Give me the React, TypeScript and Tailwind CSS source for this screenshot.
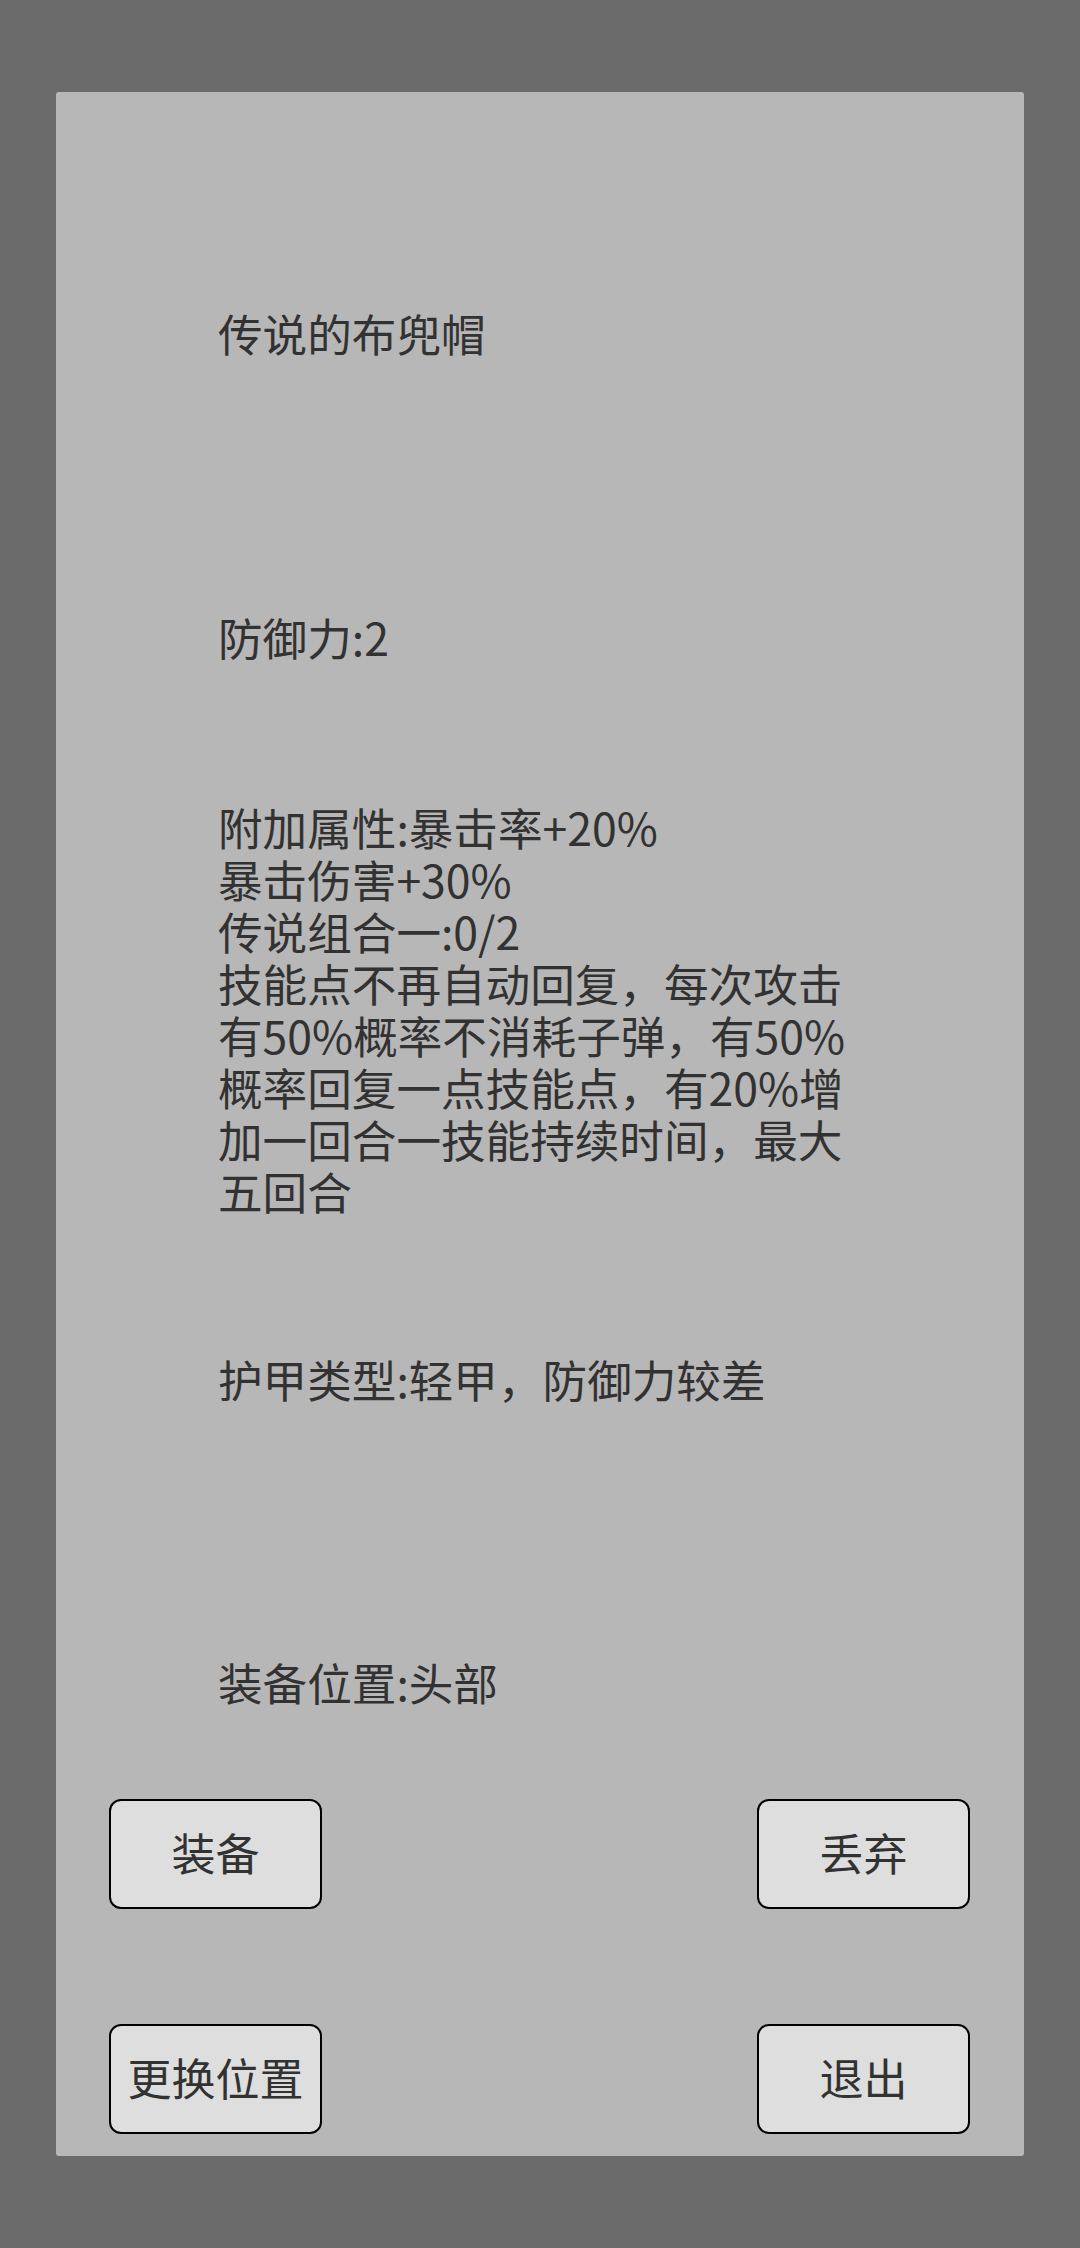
import React from "react";

const font = { fontFamily: '"Noto Sans CJK SC", sans-serif' };

function Btn({ label }: { label: string }) {
  return (
    <div className="w-[213px] h-[110px] rounded-[12px] border-2 border-black bg-[#dedede] flex items-center justify-center pb-[5px] text-[44px] leading-none text-[#323232]">
      {label}
    </div>
  );
}

export default function App() {
  const para = [
    "附加属性:暴击率+20%",
    "暴击伤害+30%",
    "传说组合一:0/2",
    "技能点不再自动回复，每次攻击",
    "有50%概率不消耗子弹，有50%",
    "概率回复一点技能点，有20%增",
    "加一回合一技能持续时间，最大",
    "五回合",
  ];
  return (
    <div className="w-[1080px] h-[2248px] bg-[#6b6b6b] pt-[92px] pl-[56px]" style={font}>
      <div className="w-[968px] h-[2064px] bg-[#b7b7b7] rounded-[3px] flex flex-col text-[#323232] text-[44.6px] leading-[52px]">
        <div className="pl-[162px] pt-[215px] flex flex-col">
          <div className="h-[52px] whitespace-nowrap">传说的布兜帽</div>
          <div className="h-[52px] mt-[252px] whitespace-nowrap">防御力:2</div>
          <p className="mt-[138px] h-[416px] whitespace-nowrap">
            {para.map((l, i) => (
              <React.Fragment key={i}>
                {l}
                {i < para.length - 1 && <br />}
              </React.Fragment>
            ))}
          </p>
          <div className="h-[52px] mt-[136px] whitespace-nowrap">护甲类型:轻甲，防御力较差</div>
          <div className="h-[52px] mt-[251px] whitespace-nowrap">装备位置:头部</div>
        </div>
        <div className="mt-[91px] pl-[53px] pr-[54px] flex justify-between">
          <Btn label="装备" />
          <Btn label="丢弃" />
        </div>
        <div className="mt-[115px] pl-[53px] pr-[54px] flex justify-between">
          <Btn label="更换位置" />
          <Btn label="退出" />
        </div>
      </div>
    </div>
  );
}
